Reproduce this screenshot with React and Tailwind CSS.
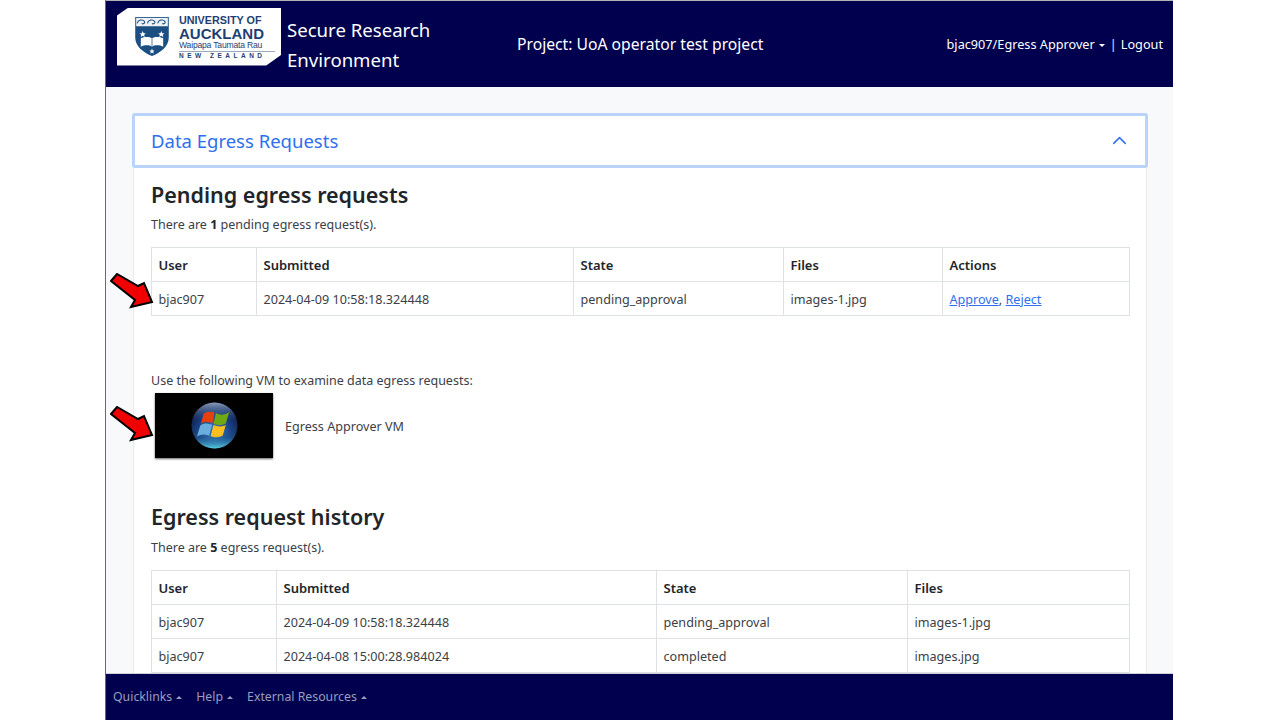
import { ChevronUp } from "lucide-react";

const font = { fontFamily: '"Noto Sans", sans-serif' };

const UoaLogo = () => {
  return (
    <div className="relative h-[58px] w-[164px] shrink-0 bg-white [clip-path:polygon(7%_0,100%_0,100%_82%,91%_100%,0_100%,0_14%)]" style={{ fontFamily: '"Liberation Sans", sans-serif' }}>
      <svg viewBox="0 0 38 44" className="absolute left-[17px] top-[8px] h-[41px] w-[36px]">
        <path d="M1 1h36v22c0 10-9 16-18 20C10 39 1 33 1 23z" fill="#1b4f82" />
        <rect x="2" y="2" width="34" height="9" fill="#eef2f6" />
        <path d="M3 8c1-4 6-5 8-2 1 2-2 3-3 2M14 8c1-4 6-5 8-2 1 2-2 3-3 2M25 8c1-4 6-5 8-2 1 2-2 3-3 2" stroke="#1b4f82" strokeWidth="1.1" fill="none" />
        <path d="M9 16l1 2.4 2.4.2-1.8 1.5.6 2.4L9 21.2l-2.2 1.3.6-2.4-1.8-1.5 2.4-.2zM29 16l1 2.4 2.4.2-1.8 1.5.6 2.4-2.2-1.3-2.2 1.3.6-2.4-1.8-1.5 2.4-.2z" fill="#fff" />
        <path d="M7 24c4-2 9-2 12 0 3-2 8-2 12 0v9c-4-2-9-2-12 0-3-2-8-2-12 0z" fill="#fff" />
        <path d="M19 24v9" stroke="#1b4f82" strokeWidth="0.8" />
        <path d="M19 35l.8 2 2 .1-1.5 1.3.5 2-1.8-1.1-1.8 1.1.5-2-1.5-1.3 2-.1z" fill="#fff" />
      </svg>
      <div className="absolute left-[62px] top-[7px] w-[96px] text-[#1f3f73]">
        <div className="text-[10.8px] font-bold leading-[11px] whitespace-nowrap">UNIVERSITY OF</div>
        <div className="text-[15px] font-bold leading-[15px] whitespace-nowrap">AUCKLAND</div>
        <div className="-mt-[1px] border-b border-[#9aa9bd] pb-[1px] text-[8.6px] leading-[10px] tracking-[-0.2px] whitespace-nowrap">Waipapa Taumata Rau</div>
        <div className="text-[6.5px] font-bold leading-[7px] tracking-[3.5px] whitespace-nowrap">NEW ZEALAND</div>
      </div>
    </div>
  );
};

const WindowsOrb = () => {
  return (
    <svg viewBox="0 0 48 48" className="h-[47px] w-[47px]">
      <defs>
        <radialGradient id="orb" cx="50%" cy="58%" r="55%">
          <stop offset="0%" stopColor="#3f82bd" />
          <stop offset="65%" stopColor="#173a80" />
          <stop offset="100%" stopColor="#122046" />
        </radialGradient>
        <linearGradient id="orbGlow" x1="0" y1="0" x2="0" y2="1">
          <stop offset="0%" stopColor="#8b9cb8" />
          <stop offset="40%" stopColor="#2b5291" stopOpacity="0" />
          <stop offset="75%" stopColor="#2b7fb0" stopOpacity="0.3" />
          <stop offset="100%" stopColor="#58cfe0" />
        </linearGradient>
      </defs>
      <circle cx="24" cy="24" r="23.5" fill="url(#orb)" />
      <circle cx="24" cy="24" r="23.5" fill="url(#orbGlow)" />
      <path d="M13 12c4-3 8-2 11-1l-2 10.500c-4-1-8-2-12 1z" fill="#e6400f" />
      <path d="M25.500 11.500c4 2 9 2 13.500-1l-3.500 11.500c-4 2-9 2-12.500 0z" fill="#6fa812" />
      <path d="M9.500 24c4-3 8-2 12-.5l-3 11c-4-2-8.500-2-12.500 1z" fill="#6aaedd" />
      <path d="M23 23.500c4 2 8.500 2 12.500 0l-3 10.500c-4 3-9 2-12.500 1z" fill="#fdbf1e" />
    </svg>
  );
};

const RedArrow = ({ className }) => {
  return (
    <svg viewBox="0 0 44 36" className={className}>
      <path d="M1 8 7 1l21 12 6-3 8 19-21 5 4-7z" fill="#f00000" stroke="#000" strokeWidth="2" strokeLinejoin="miter" />
    </svg>
  );
};

const DataTable = ({ widths, headers, rows }) => {
  return (
    <table className="w-full table-fixed border-collapse border border-[#dee2e6] text-[12.6px] text-[#212529]">
      <colgroup>
        {widths.map((w, i) => (
          <col key={i} style={{ width: w }} />
        ))}
      </colgroup>
      <thead>
        <tr>
          {headers.map((h) => (
            <th key={h} className="h-[34px] border border-[#dee2e6] px-[6.5px] pt-[2px] text-left text-[13px] font-semibold">{h}</th>
          ))}
        </tr>
      </thead>
      <tbody>
        {rows.map((row, i) => (
          <tr key={i}>
            {row.map((c, j) => (
              <td key={j} className="h-[34px] border border-[#dee2e6] px-[6.5px] pt-[3px] text-[#3b4046]">{c}</td>
            ))}
          </tr>
        ))}
      </tbody>
    </table>
  );
};

const FooterLink = ({ children }) => {
  return (
    <span className="flex items-center gap-[4px] text-[#9a9dbd]">
      {children}
      <span className="h-0 w-0 border-x-[3px] border-b-[3px] border-x-transparent border-b-[#9a9dbd]" />
    </span>
  );
};

export default function App() {
  return (
    <div className="h-screen overflow-hidden bg-white" style={font}>
      <div className="relative ml-[105px] flex h-full w-[1068px] flex-col border-l border-[#2f7f9f]">

        {/* Header */}
        <header className="flex h-[87px] shrink-0 items-center border-t border-[#b5b5b5] bg-[#00004f] pl-[11px] pr-[10px] text-white">
          <div className="-mt-[15px]"><UoaLogo /></div>
          <div className="ml-[6px] w-[190px] text-[18.6px] leading-[30px] mt-[2px]">Secure Research Environment</div>
          <div className="ml-[40px] text-[15.7px] mt-[2px]">Project: UoA operator test project</div>
          <div className="ml-auto flex items-center text-[12.7px] mt-[2px]">
            <span>bjac907/Egress Approver</span>
            <span className="ml-[4px] mt-[1px] h-0 w-0 border-x-[3px] border-t-[3px] border-x-transparent border-t-white" />
            <span className="ml-[5px] mr-[4px] font-semibold text-[#9fc5ff]">|</span>
            <span>Logout</span>
          </div>
        </header>

        {/* Main */}
        <main className="min-h-0 flex-1 overflow-hidden bg-[#f8f9fa] pl-[26px] pr-[25px] pt-[26px]">
          <div className="flex h-[55px] items-center justify-between rounded-[3px] border-[3px] border-[#b9d3fb] bg-white pl-[16px] pr-[14px] text-[#2f6fed]">
            <span className="mt-[1px] text-[18.5px]">Data Egress Requests</span>
            <ChevronUp size={23} strokeWidth={1.5} />
          </div>
          <div className="mx-[1px] border-x border-[#e9ecef] bg-white pl-[17px] pr-[18px] pt-[11px] pb-[40px] text-[12.5px] text-[#3b4046]">
            <h2 className="text-[21.5px] font-semibold leading-[32px] text-[#212529]">Pending egress requests</h2>
            <p className="mt-[4px] mb-[12px] leading-[20px]">There are <b className="text-[#212529]">1</b> pending egress request(s).</p>
            <DataTable
              widths={[105, 317, 210, 159, 187]}
              headers={["User", "Submitted", "State", "Files", "Actions"]}
              rows={[
                [
                  "bjac907",
                  "2024-04-09 10:58:18.324448",
                  "pending_approval",
                  "images-1.jpg",
                  <span key="a"><a className="text-[#2f6fed] underline">Approve</a>, <a className="text-[#2f6fed] underline">Reject</a></span>,
                ],
              ]}
            />
            <p className="mt-[55px] leading-[20px]">Use the following VM to examine data egress requests:</p>
            <div className="mt-[2px] flex items-center">
              <div className="ml-[4px] flex h-[65px] w-[118px] items-center justify-center bg-black shadow-[0_1px_2px_rgba(0,0,0,0.6)]">
                <WindowsOrb />
              </div>
              <span className="ml-[12px] mt-[3px] text-[12.6px]">Egress Approver VM</span>
            </div>
            <h2 className="mt-[43px] text-[21.5px] font-semibold leading-[32px] text-[#212529]">Egress request history</h2>
            <p className="mt-[5px] mb-[12px] leading-[20px]">There are <b className="text-[#212529]">5</b> egress request(s).</p>
            <DataTable
              widths={[125, 380, 251, 222]}
              headers={["User", "Submitted", "State", "Files"]}
              rows={[
                ["bjac907", "2024-04-09 10:58:18.324448", "pending_approval", "images-1.jpg"],
                ["bjac907", "2024-04-08 15:00:28.984024", "completed", "images.jpg"],
              ]}
            />
          </div>
        </main>

        {/* Footer */}
        <footer className="flex h-[47px] shrink-0 items-center gap-[14px] border-t border-[#d0d0d8] bg-[#00004f] pl-[7px] pt-[1px] text-[12.3px]">
          <FooterLink>Quicklinks</FooterLink>
          <FooterLink>Help</FooterLink>
          <FooterLink>External Resources</FooterLink>
        </footer>

        {/* Callout arrows */}
        <RedArrow className="absolute left-[4px] top-[273px] h-[36px] w-[44px]" />
        <RedArrow className="absolute left-[4px] top-[406px] h-[36px] w-[44px]" />
      </div>
    </div>
  );
}
